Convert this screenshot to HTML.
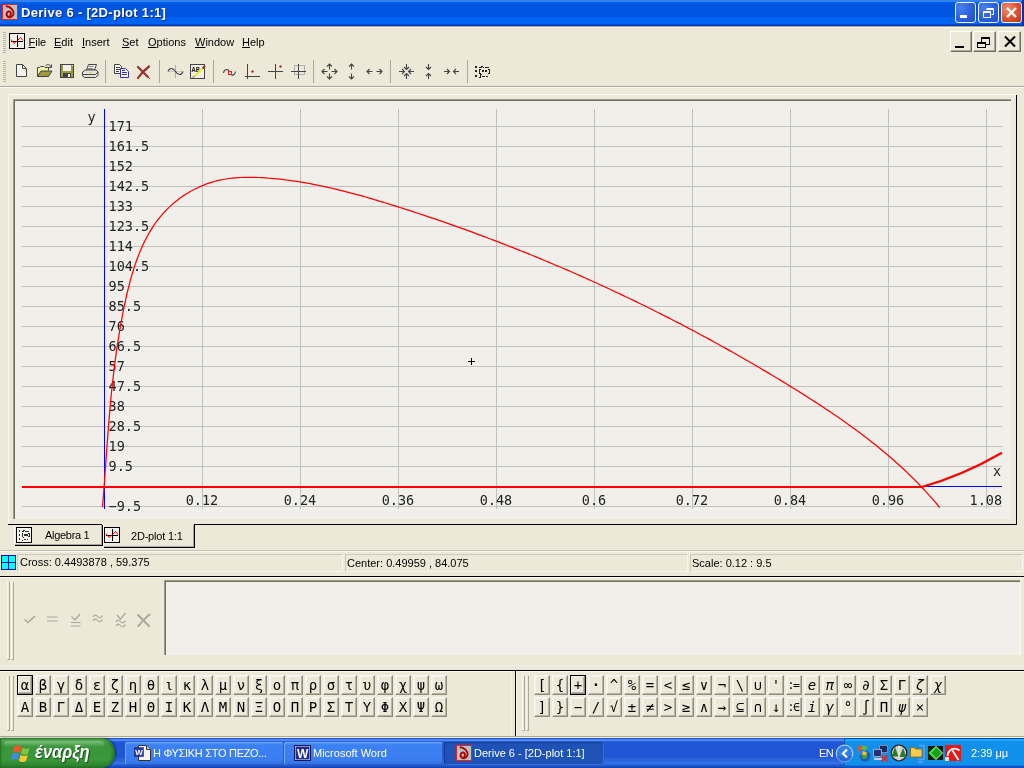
<!DOCTYPE html>
<html><head><meta charset="utf-8"><title>Derive 6 - [2D-plot 1:1]</title>
<style>
*{margin:0;padding:0;box-sizing:border-box}
html,body{width:1024px;height:768px;overflow:hidden;background:#ECE9D8}
#w{position:absolute;left:0;top:0;width:1024px;height:768px;will-change:transform}
body{position:relative;font-family:"Liberation Sans",sans-serif;font-size:11px;color:#000}
.a{position:absolute}
.t{position:absolute;white-space:pre;line-height:13px;height:13px}
.mono{font-family:"DejaVu Sans Mono","Liberation Mono",monospace;font-size:13.5px;line-height:15px;height:15px;position:absolute;white-space:pre;color:#222}
u{text-decoration:underline;text-underline-offset:1px}
#title{left:0;top:0;width:1024px;height:26px;background:linear-gradient(to bottom,#3580E8 0,#3580E8 2px,#0061F0 2px,#0061F0 4px,#0054E0 4.5px,#0054E0 16.5px,#0062F0 17px,#0062F0 23.5px,#0048CC 24.5px,#0038B0 26px)}
#title .tt{left:21px;top:5px;color:#fff;font-weight:bold;font-size:13px;line-height:16px;height:16px;text-shadow:1px 1px 0 #0A2B8C;letter-spacing:.3px}
  .cb{position:absolute;top:2px;width:21px;height:21px;border:1px solid #F0F0F0;border-radius:3px;background:radial-gradient(circle at 25% 25%,#4A80EE 0,#2C60DC 55%,#2050C8 100%)}
.cb.x{background:radial-gradient(circle at 30% 30%,#F09070 0,#DB5130 55%,#B8351A 100%)}
.mb{position:absolute;top:31px;width:22px;height:21px;background:#ECE9D8;border:1px solid;border-color:#fff #716F64 #716F64 #fff;box-shadow:inset -1px -1px 0 #ACA899}
.gb{position:absolute;width:16px;height:20px;border:1px solid;border-color:#F6F5F0 #8E8B7E #8E8B7E #F6F5F0;background:#ECE9D8;box-shadow:inset -1px -1px 0 #B8B5A5,inset 1px 1px 0 #F4F3EE}
.gb span{position:absolute;left:-4px;right:-4px;top:0;height:18px;line-height:18px;text-align:center;font-family:"DejaVu Sans Mono","Liberation Mono",monospace;font-size:14px;color:#000}
</style></head>
<body>
<div id="w">
<div id="title" class="a">
<svg class="a" style="left:2px;top:4px" width="16" height="16" viewBox="0 0 16 16"><rect x="0.5" y="0.5" width="15" height="15" fill="#C0C0C0" stroke="#E8201C" shape-rendering="crispEdges"/><path d="M4.5 2.300C8.5 3 12 6 11.5 10 11.200 13 7 14.200 5.200 12 3.800 10 5 7.200 7.300 7.400 9 7.600 9.5 10 8.300 11.5" fill="none" stroke="#B00808" stroke-width="2" stroke-linecap="round"/></svg>
<div class="t tt">Derive 6 - [2D-plot 1:1]</div>
<div class="a" style="left:1022px;top:0;width:2px;height:26px;background:#0A2FA0"></div>
<div class="cb" style="left:955px"><div class="a" style="left:4px;top:12px;width:7px;height:3px;background:#fff"></div></div>
<div class="cb" style="left:978px"><svg class="a" style="left:3px;top:3px" width="13" height="13" viewBox="0 0 13 13"><path d="M4.5 2.5h7v6h-2 M4.5 3.5h7" fill="none" stroke="#fff" stroke-width="1"/><path d="M1.5 5.5h7v6h-7z M1.5 6.5h7" fill="none" stroke="#fff" stroke-width="1"/></svg></div>
<div class="cb x" style="left:1001px"><svg class="a" style="left:3px;top:3px" width="13" height="13" viewBox="0 0 13 13"><path d="M2 2l9 9M11 2l-9 9" stroke="#fff" stroke-width="2.2" stroke-linecap="butt"/></svg></div>
</div>
<div class="a" style="left:0;top:26px;width:1024px;height:1px;background:#A9A592"></div>
<div class="a" style="left:0;top:27px;width:1024px;height:1px;background:#F6F4EC"></div>
<div class="a" style="left:3px;top:32px;width:3px;height:21px;background:repeating-linear-gradient(to bottom,#B8B4A2 0,#B8B4A2 1px,transparent 1px,transparent 2px)"></div>
<svg class="a" style="left:9px;top:33px" width="16" height="16" viewBox="0 0 16 16"><g shape-rendering="crispEdges"><rect x="0.5" y="0.5" width="15" height="15" fill="#F2F1EC" stroke="#000"/><rect x="8" y="2" width="1" height="12" fill="#000"/><rect x="2" y="8" width="12" height="1" fill="#000"/></g><path d="M2 6.5l3 4 3.5-3 3-3 2.5 3" fill="none" stroke="#F00000" stroke-width="1"/></svg>
<div class="t" style="left:28.5px;top:36px"><u>F</u>ile</div>
<div class="t" style="left:54px;top:36px"><u>E</u>dit</div>
<div class="t" style="left:82px;top:36px"><u>I</u>nsert</div>
<div class="t" style="left:122px;top:36px"><u>S</u>et</div>
<div class="t" style="left:148px;top:36px"><u>O</u>ptions</div>
<div class="t" style="left:195px;top:36px"><u>W</u>indow</div>
<div class="t" style="left:242px;top:36px"><u>H</u>elp</div>
<div class="mb" style="left:950px"><div class="a" style="left:4px;top:14px;width:9px;height:2px;background:#000"></div></div>
<div class="mb" style="left:973px;width:23px"><svg class="a" style="left:0;top:0" width="21" height="19" viewBox="974 32 21 19" shape-rendering="crispEdges"><rect x="981" y="37" width="9" height="2"/><rect x="981" y="37" width="1" height="5"/><rect x="989" y="37" width="1" height="8"/><rect x="986" y="44" width="4" height="1"/><rect x="977" y="42" width="9" height="2"/><rect x="977" y="42" width="1" height="6"/><rect x="985" y="42" width="1" height="6"/><rect x="977" y="47" width="9" height="1"/></svg></div>
<div class="mb" style="left:998px;width:23px"><svg class="a" style="left:4px;top:3px" width="14" height="13" viewBox="0 0 14 13"><path d="M2 1.5l10 10M12 1.5l-10 10" stroke="#000" stroke-width="2"/></svg></div>
<div class="a" style="left:3px;top:61px;width:3px;height:22px;background:repeating-linear-gradient(to bottom,#B8B4A2 0,#B8B4A2 1px,transparent 1px,transparent 2px)"></div>
<svg class="a" style="left:0;top:56px" width="512" height="32" viewBox="0 56 512 32"><g shape-rendering="crispEdges"><rect x="105" y="60" width="1" height="23" fill="#ACA899"/><rect x="159" y="60" width="1" height="23" fill="#ACA899"/><rect x="213" y="60" width="1" height="23" fill="#ACA899"/><rect x="313" y="60" width="1" height="23" fill="#ACA899"/><rect x="390" y="60" width="1" height="23" fill="#ACA899"/><rect x="467" y="60" width="1" height="23" fill="#ACA899"/></g><path d="M16.5 64.5h6l4 4v8h-10z" fill="#F4F3EE" stroke="#444" stroke-width="1"/><path d="M22.5 64.5v4h4" fill="none" stroke="#444"/><path d="M37.5 76.5v-9h2l1-1h3.5l1 1h3.5v3" fill="#F4F2A8" stroke="#444"/><path d="M37.5 76.5l3.5-5.5h11l-3.5 5.5z" fill="#9C9A3C" stroke="#444"/><path d="M45.5 66c1.5-2 4.5-2 5.5 1M51.5 64.5v3h-3" fill="none" stroke="#444"/><rect x="60.5" y="64.5" width="13" height="13" fill="#9C9A3C" stroke="#444"/><rect x="63" y="65" width="8" height="6" fill="#F0EFEA"/><rect x="72" y="65" width="1" height="1" fill="#F0EFEA"/><rect x="63" y="73" width="8" height="4" fill="#444"/><rect x="68" y="74" width="2" height="3" fill="#F0EFEA"/><path d="M86.5 70l2-5.5h8l-2 5.5z" fill="#F4F3EE" stroke="#444"/><path d="M82.5 72l3-2h10.5l2 2v3.5l-2.5 2h-11l-2-1.5z" fill="#E4E2D8" stroke="#444"/><path d="M83 74.5h12.5l2.5-2.5" fill="none" stroke="#444"/><rect x="89" y="72" width="3" height="1" fill="#E8E000"/><path d="M88.5 66.5h5M88 68.5h5" stroke="#888" stroke-width="1"/><path d="M114.5 64.5h5l2 2v7h-7z" fill="#F4F3EE" stroke="#444"/><path d="M116 67.5h4M116 69.5h4M116 71.5h3" stroke="#444"/><path d="M120.5 68.5h5l3 3v6h-8z" fill="#F4F3EE" stroke="#3434A8"/><path d="M122 72.5h5M122 74.5h5M122 70.5h3" stroke="#3434A8"/><path d="M138 67l10 10M149 66.5c-4 3-8 7-11 11.5" fill="none" stroke="#9C3030" stroke-width="2.2" stroke-linecap="round"/><rect x="149" y="78" width="1" height="1" fill="#9C3030"/><rect x="175" y="65" width="1" height="13" fill="#B0B0B0" shape-rendering="crispEdges"/><rect x="168" y="71" width="15" height="1" fill="#C8C8C8" shape-rendering="crispEdges"/><path d="M168 71.5c1.5-4 5-4 7.5 0s6 4 7.5 0" fill="none" stroke="#444" stroke-width="1.1"/><rect x="190.5" y="64.5" width="14" height="14" fill="#F0EFEA" stroke="#444"/><text x="191.5" y="71.5" font-family="Liberation Mono,monospace" font-size="7" font-weight="bold" fill="#222">AB</text><path d="M194.5 76.5l8.5-8.5" stroke="#F0F020" stroke-width="2.200"/><path d="M202.5 68.5l2.5-2.5" stroke="#9C3030" stroke-width="2.200"/><path d="M192.5 77.5l2-0.5-1-1z" fill="#888" stroke="#888" stroke-width=".6"/><path d="M223.5 73c0.5-4 5-5 6 -0.5" fill="none" stroke="#444" stroke-width="1.100"/><path d="M231 74.5c2 1.5 4 0 4.5-3" fill="none" stroke="#444" stroke-width="1.100"/><rect x="228.5" y="71.5" width="3" height="3" fill="#FFC8C8" stroke="#F02020" stroke-width="1"/><g shape-rendering="crispEdges"><rect x="247" y="64" width="1" height="15" fill="#444"/><rect x="245" y="76" width="15" height="1" fill="#444"/></g><path d="M252.5 70l1.5 1.5-1.5 1.5-1.5-1.5z" fill="#9C3030"/><g shape-rendering="crispEdges"><rect x="275" y="64" width="1" height="15" fill="#444"/><rect x="268" y="71" width="15" height="1" fill="#444"/></g><path d="M280.5 65l1.5 1.5-1.5 1.5-1.5-1.5z" fill="#9C3030"/><g shape-rendering="crispEdges"><rect x="294.5" y="65.5" width="10" height="9" fill="none" stroke="#B0B0B0"/><rect x="298" y="64" width="1" height="15" fill="#444"/><rect x="291" y="71" width="15" height="1" fill="#444"/></g><path d="M331.5 71.5L337.0 71.5M334.5 74.0L337.0 71.5L334.5 69.0" fill="none" stroke="#444" stroke-width="1.100"/><path d="M327.5 71.5L322.0 71.5M324.5 69.0L322.0 71.5L324.5 74.0" fill="none" stroke="#444" stroke-width="1.100"/><path d="M329.5 73.5L329.5 79.0M327.0 76.5L329.5 79.0L332.0 76.5" fill="none" stroke="#444" stroke-width="1.100"/><path d="M329.5 69.5L329.5 64.0M332.0 66.5L329.5 64.0L327.0 66.5" fill="none" stroke="#444" stroke-width="1.100"/><path d="M351.5 73.5L351.5 79.0M349.0 76.5L351.5 79.0L354.0 76.5" fill="none" stroke="#444" stroke-width="1.100"/><path d="M351.5 69.5L351.5 64.0M354.0 66.5L351.5 64.0L349.0 66.5" fill="none" stroke="#444" stroke-width="1.100"/><path d="M376.5 71.5L382.0 71.5M379.5 74.0L382.0 71.5L379.5 69.0" fill="none" stroke="#444" stroke-width="1.100"/><path d="M372.5 71.5L367.0 71.5M369.5 69.0L367.0 71.5L369.5 74.0" fill="none" stroke="#444" stroke-width="1.100"/><path d="M414.0 71.5L408.5 71.5M411.0 69.0L408.5 71.5L411.0 74.0" fill="none" stroke="#444" stroke-width="1.100"/><path d="M399.0 71.5L404.5 71.5M402.0 74.0L404.5 71.5L402.0 69.0" fill="none" stroke="#444" stroke-width="1.100"/><path d="M406.5 79.0L406.5 73.5M409.0 76.0L406.5 73.5L404.0 76.0" fill="none" stroke="#444" stroke-width="1.100"/><path d="M406.5 64.0L406.5 69.5M404.0 67.0L406.5 69.5L409.0 67.0" fill="none" stroke="#444" stroke-width="1.100"/><path d="M428.5 79.0L428.5 73.5M431.0 76.0L428.5 73.5L426.0 76.0" fill="none" stroke="#444" stroke-width="1.100"/><path d="M428.5 64.0L428.5 69.5M426.0 67.0L428.5 69.5L431.0 67.0" fill="none" stroke="#444" stroke-width="1.100"/><path d="M459.0 71.5L453.5 71.5M456.0 69.0L453.5 71.5L456.0 74.0" fill="none" stroke="#444" stroke-width="1.100"/><path d="M444.0 71.5L449.5 71.5M447.0 74.0L449.5 71.5L447.0 69.0" fill="none" stroke="#444" stroke-width="1.100"/><g shape-rendering="crispEdges" fill="#222"><rect x="475" y="66" width="2" height="2"/><rect x="475" y="70" width="2" height="2"/><rect x="475" y="75" width="2" height="2"/><rect x="479" y="67" width="3" height="1"/><rect x="483" y="67" width="1" height="1"/><rect x="485" y="67" width="4" height="1"/><rect x="481" y="66" width="2" height="1"/><rect x="479" y="69" width="1" height="5"/><rect x="479" y="69" width="2" height="1"/><rect x="479" y="73" width="2" height="1"/><rect x="482" y="70" width="2" height="2"/><rect x="485" y="70" width="2" height="2"/><rect x="489" y="69" width="1" height="5"/><rect x="488" y="69" width="2" height="1"/><rect x="488" y="73" width="2" height="1"/><rect x="480" y="74" width="1" height="4"/><rect x="481" y="74" width="1" height="1"/><rect x="479" y="77" width="1" height="1"/><rect x="482" y="76" width="3" height="1"/><rect x="486" y="76" width="2" height="1"/></g></svg>
<div class="a" style="left:0;top:86px;width:1024px;height:1px;background:#ACA899"></div>
<div class="a" style="left:0;top:87px;width:1024px;height:1px;background:#FBFAF5"></div>
<div class="a" style="left:8px;top:94px;width:1008px;height:1px;background:#F8F7F2"></div>
<div class="a" style="left:8px;top:94px;width:1px;height:431px;background:#F8F7F2"></div>
<div class="a" style="left:1016px;top:95px;width:1px;height:430px;background:#000"></div>
<div class="a" style="left:194px;top:524px;width:823px;height:1px;background:#000"></div>
<div class="a" style="left:8px;top:524px;width:94px;height:1px;background:#000"></div>
<div class="a" style="left:13px;top:99px;width:998px;height:420px;background:#9D9A8C"></div>
<div class="a" style="left:14px;top:100px;width:997px;height:419px;background:#716F64"></div>
<div class="a" style="left:15px;top:101px;width:996px;height:418px;background:#F0EFEA"></div>
<svg class="a" style="left:0;top:0" width="1024" height="768" viewBox="0 0 1024 768" shape-rendering="crispEdges"><rect x="22" y="126" width="980" height="1" fill="#C0C0C0"/><rect x="22" y="146" width="980" height="1" fill="#C0C0C0"/><rect x="22" y="166" width="980" height="1" fill="#C0C0C0"/><rect x="22" y="186" width="980" height="1" fill="#C0C0C0"/><rect x="22" y="206" width="980" height="1" fill="#C0C0C0"/><rect x="22" y="226" width="980" height="1" fill="#C0C0C0"/><rect x="22" y="246" width="980" height="1" fill="#C0C0C0"/><rect x="22" y="266" width="980" height="1" fill="#C0C0C0"/><rect x="22" y="286" width="980" height="1" fill="#C0C0C0"/><rect x="22" y="306" width="980" height="1" fill="#C0C0C0"/><rect x="22" y="326" width="980" height="1" fill="#C0C0C0"/><rect x="22" y="346" width="980" height="1" fill="#C0C0C0"/><rect x="22" y="366" width="980" height="1" fill="#C0C0C0"/><rect x="22" y="386" width="980" height="1" fill="#C0C0C0"/><rect x="22" y="406" width="980" height="1" fill="#C0C0C0"/><rect x="22" y="426" width="980" height="1" fill="#C0C0C0"/><rect x="22" y="446" width="980" height="1" fill="#C0C0C0"/><rect x="22" y="466" width="980" height="1" fill="#C0C0C0"/><rect x="22" y="486" width="980" height="1" fill="#C0C0C0"/><rect x="22" y="506" width="980" height="1" fill="#C0C0C0"/><rect x="202" y="109" width="1" height="400" fill="#C0C0C0"/><rect x="300" y="109" width="1" height="400" fill="#C0C0C0"/><rect x="398" y="109" width="1" height="400" fill="#C0C0C0"/><rect x="496" y="109" width="1" height="400" fill="#C0C0C0"/><rect x="594" y="109" width="1" height="400" fill="#C0C0C0"/><rect x="692" y="109" width="1" height="400" fill="#C0C0C0"/><rect x="790" y="109" width="1" height="400" fill="#C0C0C0"/><rect x="888" y="109" width="1" height="400" fill="#C0C0C0"/><rect x="986" y="109" width="1" height="400" fill="#C0C0C0"/><rect x="104" y="109" width="1" height="400" fill="#0000FF"/><rect x="22" y="486" width="980" height="1" fill="#0000FF"/></svg>
<div class="mono" style="left:108.6px;top:118.5px">171</div>
<div class="mono" style="left:108.6px;top:138.5px">161.5</div>
<div class="mono" style="left:108.6px;top:158.5px">152</div>
<div class="mono" style="left:108.6px;top:178.5px">142.5</div>
<div class="mono" style="left:108.6px;top:198.5px">133</div>
<div class="mono" style="left:108.6px;top:218.5px">123.5</div>
<div class="mono" style="left:108.6px;top:238.5px">114</div>
<div class="mono" style="left:108.6px;top:258.5px">104.5</div>
<div class="mono" style="left:108.6px;top:278.5px">95</div>
<div class="mono" style="left:108.6px;top:298.5px">85.5</div>
<div class="mono" style="left:108.6px;top:318.5px">76</div>
<div class="mono" style="left:108.6px;top:338.5px">66.5</div>
<div class="mono" style="left:108.6px;top:358.5px">57</div>
<div class="mono" style="left:108.6px;top:378.5px">47.5</div>
<div class="mono" style="left:108.6px;top:398.5px">38</div>
<div class="mono" style="left:108.6px;top:418.5px">28.5</div>
<div class="mono" style="left:108.6px;top:438.5px">19</div>
<div class="mono" style="left:108.6px;top:458.5px">9.5</div>
<div class="mono" style="left:108.6px;top:498.5px">−9.5</div>
<div class="mono" style="left:185.7px;top:493px">0.12</div>
<div class="mono" style="left:283.7px;top:493px">0.24</div>
<div class="mono" style="left:381.7px;top:493px">0.36</div>
<div class="mono" style="left:479.7px;top:493px">0.48</div>
<div class="mono" style="left:581.8px;top:493px">0.6</div>
<div class="mono" style="left:675.7px;top:493px">0.72</div>
<div class="mono" style="left:773.7px;top:493px">0.84</div>
<div class="mono" style="left:871.7px;top:493px">0.96</div>
<div class="mono" style="left:969.5px;top:493px">1.08</div>
<div class="mono" style="left:87.5px;top:110px">y</div>
<div class="mono" style="left:993px;top:463.5px">x</div>
<svg class="a" style="left:0;top:0" width="1024" height="768" viewBox="0 0 1024 768"><rect x="22" y="486" width="901" height="2" fill="#FF0000" shape-rendering="crispEdges"/><path d="M102.5 507.3 102.7 504.2 103.0 501.2 103.2 498.1 103.5 495.1 103.7 492.0 103.9 489.0 104.1 485.9 104.4 482.9 104.6 479.9 104.8 476.9 105.0 473.8 105.2 470.8 105.4 467.8 105.7 464.8 105.9 461.8 106.1 458.8 106.3 455.8 106.5 452.8 106.7 449.8 107.0 446.8 107.2 443.9 107.4 440.9 107.6 437.9 107.8 434.9 108.1 432.0 108.3 429.0 108.5 426.0 108.8 423.1 109.0 420.1 109.3 417.1 109.5 414.2 109.8 411.2 110.0 408.3 110.3 405.3 110.6 402.4 110.8 399.4 111.1 396.5 111.4 393.5 111.7 390.5 112.0 387.6 112.3 384.6 112.7 381.7 113.0 378.7 113.3 375.8 113.7 372.8 114.0 369.9 114.4 366.9 114.7 364.0 115.1 361.0 115.5 358.1 115.9 355.1 116.3 352.2 116.8 349.2 117.2 346.2 117.6 343.3 118.1 340.3 118.6 337.3 119.1 334.4 119.5 331.4 120.1 328.4 120.6 325.4 121.1 322.5 121.7 319.5 122.2 316.5 122.8 313.5 123.4 310.5 124.0 307.5 124.6 304.5 125.3 301.5 125.9 298.5 126.6 295.5 127.3 292.5 128.0 289.5 128.8 286.5 129.5 283.5 130.3 280.5 131.1 277.6 132.0 274.6 132.9 271.7 133.8 268.8 134.7 265.9 135.7 263.0 136.7 260.1 137.8 257.3 138.9 254.4 140.0 251.6 141.2 248.9 142.4 246.1 143.6 243.4 144.9 240.7 146.3 238.1 147.7 235.5 149.2 232.9 150.7 230.4 152.2 227.9 153.8 225.4 155.5 223.0 157.2 220.7 159.0 218.4 160.8 216.1 162.7 213.9 164.7 211.7 166.7 209.6 168.8 207.6 170.9 205.6 173.1 203.6 175.4 201.7 177.7 199.9 180.0 198.1 182.4 196.4 184.9 194.8 187.4 193.2 189.9 191.7 192.5 190.3 195.1 189.0 197.8 187.7 200.5 186.4 203.2 185.3 205.9 184.2 208.7 183.2 211.5 182.3 214.4 181.5 217.2 180.7 220.1 180.1 223.0 179.5 226.0 179.0 228.9 178.5 231.9 178.2 234.9 177.9 237.9 177.6 240.9 177.5 243.9 177.3 246.9 177.3 250.0 177.3 253.0 177.3 256.0 177.4 259.1 177.5 262.1 177.6 265.2 177.8 268.2 178.1 271.3 178.3 274.3 178.6 277.3 178.9 280.3 179.2 283.4 179.6 286.4 180.0 289.4 180.4 292.4 180.8 295.3 181.2 298.3 181.7 301.3 182.2 304.3 182.7 307.2 183.2 310.2 183.7 313.2 184.3 316.1 184.9 319.1 185.5 322.0 186.1 324.9 186.7 327.9 187.4 330.8 188.0 333.7 188.7 336.6 189.4 339.6 190.1 342.5 190.8 345.4 191.6 348.3 192.3 351.2 193.1 354.1 193.8 357.0 194.6 359.9 195.4 362.7 196.2 365.6 197.0 368.5 197.9 371.4 198.7 374.3 199.6 377.1 200.4 380.0 201.3 382.9 202.1 385.7 203.0 388.6 203.9 391.5 204.8 394.3 205.7 397.2 206.6 400.0 207.5 402.9 208.4 405.7 209.3 408.6 210.2 411.4 211.2 414.3 212.1 417.1 213.0 420.0 214.0 422.8 214.9 425.7 215.9 428.5 216.8 431.4 217.8 434.2 218.7 437.0 219.7 439.9 220.7 442.7 221.7 445.5 222.6 448.4 223.6 451.2 224.6 454.0 225.6 456.8 226.6 459.7 227.6 462.5 228.6 465.3 229.7 468.1 230.7 470.9 231.7 473.7 232.7 476.6 233.8 479.4 234.8 482.2 235.9 485.0 236.9 487.8 238.0 490.6 239.0 493.4 240.1 496.2 241.2 499.0 242.2 501.8 243.3 504.6 244.4 507.4 245.5 510.2 246.6 513.0 247.7 515.8 248.8 518.5 249.9 521.3 251.0 524.1 252.1 526.9 253.2 529.7 254.3 532.4 255.5 535.2 256.6 538.0 257.7 540.8 258.9 543.5 260.0 546.3 261.2 549.1 262.4 551.8 263.5 554.6 264.7 557.3 265.9 560.1 267.0 562.9 268.2 565.6 269.4 568.4 270.6 571.1 271.8 573.9 273.0 576.6 274.2 579.3 275.4 582.1 276.6 584.8 277.8 587.6 279.1 590.3 280.3 593.0 281.5 595.8 282.8 598.5 284.0 601.2 285.2 603.9 286.5 606.7 287.8 609.4 289.0 612.1 290.3 614.8 291.6 617.5 292.8 620.3 294.1 623.0 295.4 625.7 296.7 628.4 298.0 631.1 299.3 633.8 300.6 636.5 301.9 639.2 303.2 641.9 304.5 644.6 305.8 647.3 307.2 650.0 308.5 652.6 309.8 655.3 311.2 658.0 312.5 660.7 313.9 663.4 315.2 666.0 316.6 668.7 317.9 671.4 319.3 674.1 320.7 676.7 322.1 679.4 323.4 682.1 324.8 684.7 326.2 687.4 327.6 690.0 329.0 692.7 330.4 695.3 331.8 698.0 333.2 700.6 334.7 703.3 336.1 705.9 337.5 708.6 338.9 711.2 340.4 713.8 341.8 716.5 343.3 719.1 344.7 721.7 346.2 724.3 347.6 727.0 349.1 729.6 350.6 732.2 352.0 734.8 353.5 737.4 355.0 740.0 356.5 742.6 358.0 745.3 359.5 747.9 361.0 750.5 362.5 753.1 364.0 755.7 365.5 758.2 367.0 760.8 368.5 763.4 370.1 766.0 371.6 768.6 373.1 771.2 374.7 773.8 376.2 776.3 377.8 778.9 379.3 781.5 380.9 784.0 382.4 786.6 384.0 789.2 385.6 791.7 387.2 794.3 388.8 796.8 390.3 799.4 391.9 801.9 393.5 804.5 395.1 807.0 396.7 809.6 398.4 812.1 400.0 814.6 401.6 817.2 403.2 819.7 404.9 822.2 406.5 824.7 408.2 827.2 409.9 829.7 411.5 832.2 413.2 834.7 414.9 837.1 416.6 839.6 418.3 842.1 420.0 844.5 421.7 847.0 423.5 849.4 425.2 851.8 427.0 854.3 428.7 856.7 430.5 859.1 432.3 861.5 434.1 863.9 435.9 866.3 437.7 868.6 439.5 871.0 441.4 873.3 443.2 875.7 445.1 878.0 447.0 880.3 448.9 882.6 450.8 884.9 452.7 887.2 454.6 889.5 456.5 891.7 458.5 894.0 460.5 896.2 462.5 898.5 464.5 900.7 466.5 902.9 468.5 905.0 470.5 907.2 472.6 909.4 474.7 911.5 476.8 913.7 478.9 915.8 481.0 917.9 483.1 920.0 485.3 922.0 487.5 924.1 489.7 926.1 491.9 928.1 494.1 930.1 496.4 932.1 498.6 934.1 500.9 936.1 503.2 938.0 505.5 939.7 507.6" fill="none" stroke="#FF0000" stroke-width="1.25" stroke-linejoin="round"/><path d="M921 487.2 Q962 475.8 1002 452.7" fill="none" stroke="#FF0000" stroke-width="2.2"/><path d="M468 361.5h7M471.5 358v7" stroke="#000" stroke-width="1" shape-rendering="crispEdges"/></svg>
<div class="a" style="left:14px;top:525px;width:1px;height:20px;background:#F8F7F2"></div>
<div class="a" style="left:15px;top:545px;width:88px;height:1px;background:#000"></div>
<div class="a" style="left:15px;top:544px;width:87px;height:1px;background:#ACA899"></div>
<div class="a" style="left:102px;top:525px;width:1px;height:21px;background:#000"></div>
<div class="a" style="left:101px;top:525px;width:1px;height:20px;background:#ACA899"></div>
<svg class="a" style="left:16px;top:527px" width="16" height="16" viewBox="0 0 16 16"><rect x="0.5" y="0.5" width="15" height="15" fill="#F4F3EE" stroke="#000" shape-rendering="crispEdges"/><g transform="translate(3,3) scale(0.73,0.92)"><g shape-rendering="crispEdges" fill="#333"><rect x="0" y="0" width="2" height="2"/><rect x="0" y="4" width="2" height="2"/><rect x="0" y="9" width="2" height="2"/><rect x="4" y="1" width="3" height="1"/><rect x="8" y="1" width="1" height="1"/><rect x="10" y="1" width="4" height="1"/><rect x="6" y="0" width="2" height="1"/><rect x="4" y="3" width="1" height="5"/><rect x="4" y="3" width="2" height="1"/><rect x="4" y="7" width="2" height="1"/><rect x="7" y="4" width="2" height="2"/><rect x="10" y="4" width="2" height="2"/><rect x="14" y="3" width="1" height="5"/><rect x="13" y="3" width="2" height="1"/><rect x="13" y="7" width="2" height="1"/><rect x="5" y="8" width="1" height="4"/><rect x="6" y="8" width="1" height="1"/><rect x="4" y="11" width="1" height="1"/><rect x="7" y="10" width="3" height="1"/><rect x="11" y="10" width="2" height="1"/></g></g></svg>
<div class="t" style="left:45px;top:528.5px;letter-spacing:-.3px">Algebra 1</div>
<div class="a" style="left:103px;top:524px;width:1px;height:23px;background:#F8F7F2"></div>
<div class="a" style="left:104px;top:547px;width:91px;height:1px;background:#000"></div>
<div class="a" style="left:104px;top:546px;width:90px;height:1px;background:#ACA899"></div>
<div class="a" style="left:194px;top:524px;width:1px;height:24px;background:#000"></div>
<div class="a" style="left:193px;top:525px;width:1px;height:22px;background:#ACA899"></div>
<svg class="a" style="left:104px;top:527px" width="16" height="16" viewBox="0 0 16 16"><g shape-rendering="crispEdges"><rect x="0.5" y="0.5" width="15" height="15" fill="#F2F1EC" stroke="#000"/><rect x="8" y="2" width="1" height="12" fill="#000"/><rect x="2" y="8" width="12" height="1" fill="#000"/></g><path d="M2 6.5l3 4 3.5-3 3-3 2.5 3" fill="none" stroke="#F00000" stroke-width="1"/></svg>
<div class="t" style="left:131px;top:530px;letter-spacing:-.2px">2D-plot 1:1</div>
<div class="a" style="left:0;top:550px;width:1024px;height:1px;background:#C5C2B2"></div>
<div class="a" style="left:0;top:551px;width:1024px;height:1px;background:#F6F5EE"></div>
<svg class="a" style="left:1px;top:555px" width="15" height="15" viewBox="0 0 15 15" shape-rendering="crispEdges"><rect x="0.5" y="0.5" width="14" height="14" fill="#00FFFF" stroke="#1010A0"/><rect x="7" y="1" width="1" height="13" fill="#1010A0"/><rect x="1" y="7" width="13" height="1" fill="#1010A0"/></svg>
<div class="a" style="left:17px;top:554px;width:326px;height:18px;border:1px solid;border-color:#CDCABB #F5F4EE #F5F4EE #CDCABB"></div>
<div class="a" style="left:345px;top:554px;width:343px;height:18px;border:1px solid;border-color:#CDCABB #F5F4EE #F5F4EE #CDCABB"></div>
<div class="a" style="left:690px;top:554px;width:333px;height:18px;border:1px solid;border-color:#CDCABB #F5F4EE #F5F4EE #CDCABB"></div>
<div class="t" style="left:20px;top:556px">Cross: 0.4493878 , 59.375</div>
<div class="t" style="left:347px;top:557px">Center: 0.49959 , 84.075</div>
<div class="t" style="left:692px;top:557px">Scale: 0.12 : 9.5</div>
<div class="a" style="left:0;top:576px;width:1024px;height:1px;background:#000"></div>
<div class="a" style="left:0;top:577px;width:1024px;height:1px;background:#FBF8E8"></div>
<div class="a" style="left:7px;top:582px;width:3px;height:78px;border-left:1px solid #F8F7F2;border-right:1px solid #ACA899;border-bottom:1px solid #ACA899"></div>
<div class="a" style="left:11px;top:582px;width:3px;height:78px;border-left:1px solid #F8F7F2;border-right:1px solid #ACA899;border-bottom:1px solid #ACA899"></div>
<svg class="a" style="left:0;top:608px" width="160" height="24" viewBox="0 608 160 24" fill="none" stroke="#ACA899" stroke-width="1.200"><path d="M24.5 619.5l3.5 3 7-6.5" stroke-width="1.5"/><path d="M47 617h10.5M47 621h10.5"/><path d="M71.5 616.5l3.5 3.5 5-6M71 622.5h9.5M71 626h9.5"/><path d="M93 617c1.5-2.5 3-2.5 4.5-0.5s3.5 1.5 5-1M93 621c1.5-2.5 3-2.5 4.5-0.5s3.5 1.5 5-1"/><path d="M117 615l3.5 4 5-6M116 622c1.5-2.5 3-2.5 4.5-0.5s3.5 1.5 5-1M116 626c1.5-2.5 3-2.5 4.5-0.5s3.5 1.5 5-1"/><path d="M138 615l11 11M149.5 614.5c-4 3-8 7-11 11.5" stroke-width="2" stroke-linecap="round"/></svg>
<div class="a" style="left:164px;top:580px;width:857px;height:75px;background:#FBFAF6"></div>
<div class="a" style="left:164px;top:580px;width:856px;height:75px;background:#9D9A8C"></div>
<div class="a" style="left:165px;top:581px;width:855px;height:74px;background:#716F64"></div>
<div class="a" style="left:166px;top:582px;width:854px;height:73px;background:#F0EFEA"></div>
<div class="a" style="left:0;top:665px;width:1024px;height:1px;background:#F3F2EC"></div>
<div class="a" style="left:0;top:670px;width:1024px;height:1px;background:#000"></div>
<div class="a" style="left:0;top:671px;width:1024px;height:1px;background:#FBF8E8"></div>
<div class="a" style="left:7px;top:676px;width:3px;height:55px;border-left:1px solid #F8F7F2;border-right:1px solid #ACA899;border-bottom:1px solid #ACA899"></div>
<div class="a" style="left:11px;top:676px;width:3px;height:55px;border-left:1px solid #F8F7F2;border-right:1px solid #ACA899;border-bottom:1px solid #ACA899"></div>
<div class="a" style="left:522px;top:676px;width:3px;height:55px;border-left:1px solid #F8F7F2;border-right:1px solid #ACA899;border-bottom:1px solid #ACA899"></div>
<div class="a" style="left:526px;top:676px;width:3px;height:55px;border-left:1px solid #F8F7F2;border-right:1px solid #ACA899;border-bottom:1px solid #ACA899"></div>
<div class="a" style="left:515px;top:671px;width:1px;height:66px;background:#000"></div>
<div class="a" style="left:516px;top:671px;width:1px;height:66px;background:#FBF8E8"></div>
<div class="a" style="left:511px;top:672px;width:1px;height:65px;background:#F3F2EA"></div>
<div class="gb" style="left:17px;top:675px;border-color:#000;box-shadow:inset -1px -1px 0 #8E8B7E,inset 1px 1px 0 #F6F5F0,inset -2px -2px 0 #B8B5A5"><span>α</span></div>
<div class="gb" style="left:17px;top:697px"><span>Α</span></div>
<div class="gb" style="left:35px;top:675px"><span>β</span></div>
<div class="gb" style="left:35px;top:697px"><span>Β</span></div>
<div class="gb" style="left:53px;top:675px"><span>γ</span></div>
<div class="gb" style="left:53px;top:697px"><span>Γ</span></div>
<div class="gb" style="left:71px;top:675px"><span>δ</span></div>
<div class="gb" style="left:71px;top:697px"><span>Δ</span></div>
<div class="gb" style="left:89px;top:675px"><span>ε</span></div>
<div class="gb" style="left:89px;top:697px"><span>Ε</span></div>
<div class="gb" style="left:107px;top:675px"><span>ζ</span></div>
<div class="gb" style="left:107px;top:697px"><span>Ζ</span></div>
<div class="gb" style="left:125px;top:675px"><span>η</span></div>
<div class="gb" style="left:125px;top:697px"><span>Η</span></div>
<div class="gb" style="left:143px;top:675px"><span>θ</span></div>
<div class="gb" style="left:143px;top:697px"><span>Θ</span></div>
<div class="gb" style="left:161px;top:675px"><span>ι</span></div>
<div class="gb" style="left:161px;top:697px"><span>Ι</span></div>
<div class="gb" style="left:179px;top:675px"><span>κ</span></div>
<div class="gb" style="left:179px;top:697px"><span>Κ</span></div>
<div class="gb" style="left:197px;top:675px"><span>λ</span></div>
<div class="gb" style="left:197px;top:697px"><span>Λ</span></div>
<div class="gb" style="left:215px;top:675px"><span>μ</span></div>
<div class="gb" style="left:215px;top:697px"><span>Μ</span></div>
<div class="gb" style="left:233px;top:675px"><span>ν</span></div>
<div class="gb" style="left:233px;top:697px"><span>Ν</span></div>
<div class="gb" style="left:251px;top:675px"><span>ξ</span></div>
<div class="gb" style="left:251px;top:697px"><span>Ξ</span></div>
<div class="gb" style="left:269px;top:675px"><span>ο</span></div>
<div class="gb" style="left:269px;top:697px"><span>Ο</span></div>
<div class="gb" style="left:287px;top:675px"><span>π</span></div>
<div class="gb" style="left:287px;top:697px"><span>Π</span></div>
<div class="gb" style="left:305px;top:675px"><span>ρ</span></div>
<div class="gb" style="left:305px;top:697px"><span>Ρ</span></div>
<div class="gb" style="left:323px;top:675px"><span>σ</span></div>
<div class="gb" style="left:323px;top:697px"><span>Σ</span></div>
<div class="gb" style="left:341px;top:675px"><span>τ</span></div>
<div class="gb" style="left:341px;top:697px"><span>Τ</span></div>
<div class="gb" style="left:359px;top:675px"><span>υ</span></div>
<div class="gb" style="left:359px;top:697px"><span>Υ</span></div>
<div class="gb" style="left:377px;top:675px"><span>φ</span></div>
<div class="gb" style="left:377px;top:697px"><span>Φ</span></div>
<div class="gb" style="left:395px;top:675px"><span>χ</span></div>
<div class="gb" style="left:395px;top:697px"><span>Χ</span></div>
<div class="gb" style="left:413px;top:675px"><span>ψ</span></div>
<div class="gb" style="left:413px;top:697px"><span>Ψ</span></div>
<div class="gb" style="left:431px;top:675px"><span>ω</span></div>
<div class="gb" style="left:431px;top:697px"><span>Ω</span></div>
<div class="gb" style="left:534px;top:675px"><span>[</span></div>
<div class="gb" style="left:552px;top:675px"><span>{</span></div>
<div class="gb" style="left:570px;top:675px;border-color:#000;box-shadow:inset -1px -1px 0 #8E8B7E,inset 1px 1px 0 #F6F5F0,inset -2px -2px 0 #B8B5A5"><span>+</span></div>
<div class="gb" style="left:588px;top:675px"><span style="font-weight:bold">·</span></div>
<div class="gb" style="left:606px;top:675px"><span>^</span></div>
<div class="gb" style="left:624px;top:675px"><span>%</span></div>
<div class="gb" style="left:642px;top:675px"><span>=</span></div>
<div class="gb" style="left:660px;top:675px"><span>&lt;</span></div>
<div class="gb" style="left:678px;top:675px"><span>≤</span></div>
<div class="gb" style="left:696px;top:675px"><span>∨</span></div>
<div class="gb" style="left:714px;top:675px"><span>¬</span></div>
<div class="gb" style="left:732px;top:675px"><span>\</span></div>
<div class="gb" style="left:750px;top:675px"><span>∪</span></div>
<div class="gb" style="left:768px;top:675px"><span>'</span></div>
<div class="gb" style="left:786px;top:675px"><span style="letter-spacing:-1.5px;font-size:11.5px;left:-6px">:=</span></div>
<div class="gb" style="left:804px;top:675px"><span><i>e</i></span></div>
<div class="gb" style="left:822px;top:675px"><span><i>π</i></span></div>
<div class="gb" style="left:840px;top:675px"><span>∞</span></div>
<div class="gb" style="left:858px;top:675px"><span>∂</span></div>
<div class="gb" style="left:876px;top:675px"><span>Σ</span></div>
<div class="gb" style="left:894px;top:675px"><span>Γ</span></div>
<div class="gb" style="left:912px;top:675px"><span><i>ζ</i></span></div>
<div class="gb" style="left:930px;top:675px"><span><i>χ</i></span></div>
<div class="gb" style="left:534px;top:697px"><span>]</span></div>
<div class="gb" style="left:552px;top:697px"><span>}</span></div>
<div class="gb" style="left:570px;top:697px"><span>−</span></div>
<div class="gb" style="left:588px;top:697px"><span>/</span></div>
<div class="gb" style="left:606px;top:697px"><span>√</span></div>
<div class="gb" style="left:624px;top:697px"><span>±</span></div>
<div class="gb" style="left:642px;top:697px"><span>≠</span></div>
<div class="gb" style="left:660px;top:697px"><span>&gt;</span></div>
<div class="gb" style="left:678px;top:697px"><span>≥</span></div>
<div class="gb" style="left:696px;top:697px"><span>∧</span></div>
<div class="gb" style="left:714px;top:697px"><span>→</span></div>
<div class="gb" style="left:732px;top:697px"><span>⊆</span></div>
<div class="gb" style="left:750px;top:697px"><span>∩</span></div>
<div class="gb" style="left:768px;top:697px"><span>↓</span></div>
<div class="gb" style="left:786px;top:697px"><span style="letter-spacing:-1.5px;font-size:11.5px;left:-6px">:∈</span></div>
<div class="gb" style="left:804px;top:697px"><span><i>i</i></span></div>
<div class="gb" style="left:822px;top:697px"><span><i>γ</i></span></div>
<div class="gb" style="left:840px;top:697px"><span>°</span></div>
<div class="gb" style="left:858px;top:697px"><span>∫</span></div>
<div class="gb" style="left:876px;top:697px"><span>Π</span></div>
<div class="gb" style="left:894px;top:697px"><span><i>ψ</i></span></div>
<div class="gb" style="left:912px;top:697px"><span>×</span></div>
<div class="a" style="left:0;top:738px;width:1024px;height:30px;background:linear-gradient(to bottom,#1E50D0 0,#1E50D0 1px,#4888F0 1.5px,#4888F0 2.5px,#2A62D8 3.5px,#2055D5 4.5px,#2055D5 19.5px,#2A62D8 20.5px,#2A62D8 23px,#3070E8 24px,#3070E8 26px,#2458D0 27px,#2458D0 28px,#1445B8 29px,#1445B8 30px)"></div>
<div class="a" style="left:0;top:736px;width:1024px;height:1px;background:#ACA899"></div>
<div class="a" style="left:0;top:737px;width:1024px;height:1px;background:#F4F1E2"></div>
<div class="a" style="left:0;top:738px;width:115px;height:30px;border-radius:0 13px 13px 0/0 15px 15px 0;background:linear-gradient(to bottom,#2E7D2E 0,#4FA64F 2px,#47A047 4px,#3C973C 8px,#3A963A 16px,#3B983B 22px,#2F872F 27px,#236F23 30px);box-shadow:inset -3px 0 3px -1px #256F25,inset 2px 0 2px -1px #256F25,1px 0 2px rgba(0,0,60,.55)"></div>
<div class="a" style="left:4px;top:741px;width:100px;height:6px;border-radius:6px;background:linear-gradient(to bottom,rgba(255,255,255,.28),rgba(255,255,255,0))"></div>
<svg class="a" style="left:10.5px;top:742.5px" width="22" height="22" viewBox="0 0 20 20"><path d="M3 3.5c2-1.5 4-1.5 6.5 0l-1.5 5.5c-2-1.5-4.5-1.5-6.5 0z" fill="#F0562A"/><path d="M10.5 4c2 1.5 4.5 1.5 6.5 0l-1.5 5.5c-2 1.5-4.5 1.5-6.5 0z" fill="#7DC242"/><path d="M1.200 10.200c2-1.5 4.5-1.5 6.5 0l-1.5 5.5c-2-1.5-4.5-1.5-6.5 0z" fill="#3E8BE8"/><path d="M8.700 10.700c2 1.5 4.5 1.5 6.5 0l-1.5 5.5c-2 1.5-4.5 1.5-6.5 0z" fill="#F8C830"/></svg>
<div class="t" style="left:35px;top:741px;height:24px;line-height:22px;font-size:18.5px;font-style:italic;font-weight:bold;color:#fff;text-shadow:1px 1px 1px #1A4A1A;transform:scaleX(.89);transform-origin:0 0">έναρξη</div>
<div class="a" style="left:125px;top:742px;width:159px;height:23px;border-radius:3px;background:linear-gradient(to bottom,#5B9AF3 0,#3C81F3 3px,#3A7DF0 18px,#3272E0 23px);box-shadow:inset 1px 1px 0 #6FA8F8,inset -1px -1px 0 #2A5FC8"></div>
<div class="a" style="left:284px;top:742px;width:159px;height:23px;border-radius:3px;background:linear-gradient(to bottom,#5B9AF3 0,#3C81F3 3px,#3A7DF0 18px,#3272E0 23px);box-shadow:inset 1px 1px 0 #6FA8F8,inset -1px -1px 0 #2A5FC8"></div>
<div class="a" style="left:444px;top:742px;width:160px;height:23px;border-radius:3px;background:#1E52B7;box-shadow:inset 1px 1px 1px #143E96,inset -1px -1px 0 #3A6CD0"></div>
<svg class="a" style="left:133px;top:744px" width="20" height="18" viewBox="0 0 20 18"><path d="M5.5 1.5h8l4 4v11h-12z" fill="#F6F4EC" stroke="#333"/><path d="M13.5 1.5v4h4" fill="#D8D4C4" stroke="#333"/><rect x="1.5" y="3.5" width="9" height="9" fill="#2A3CA8" stroke="#101860" stroke-dasharray="1 1"/><text x="2.200" y="11" font-family="Liberation Sans,sans-serif" font-size="8" font-weight="bold" fill="#fff">W</text></svg>
<div class="t" style="left:153px;top:747px;color:#fff;letter-spacing:-.3px">Η ΦΥΣΙΚΗ ΣΤΟ ΠΕΖΟ...</div>
<svg class="a" style="left:294px;top:745px" width="17" height="16" viewBox="0 0 17 16"><rect x="0.5" y="0.5" width="16" height="15" fill="#F6F4EC" stroke="#101860"/><rect x="1.5" y="1.5" width="14" height="13" fill="#202C90"/><text x="3" y="12.5" font-family="Liberation Sans,sans-serif" font-size="12" font-weight="bold" fill="#fff">W</text></svg>
<div class="t" style="left:313px;top:747px;color:#fff">Microsoft Word</div>
<svg class="a" style="left:456px;top:745px" width="16" height="16" viewBox="0 0 16 16"><rect x="0.5" y="0.5" width="15" height="15" fill="#C0C0C0" stroke="#E8201C" shape-rendering="crispEdges"/><path d="M4.5 2.300C8.5 3 12 6 11.5 10 11.200 13 7 14.200 5.200 12 3.800 10 5 7.200 7.300 7.400 9 7.600 9.5 10 8.300 11.5" fill="none" stroke="#B00808" stroke-width="2" stroke-linecap="round"/></svg>
<div class="t" style="left:474px;top:747px;color:#fff">Derive 6 - [2D-plot 1:1]</div>
<div class="a" style="left:844px;top:738px;width:180px;height:30px;background:linear-gradient(to bottom,#0840C0 0,#0840C0 1px,#18B0F4 1.5px,#18B0F4 2.5px,#1090E8 3.5px,#1090E8 27px,#1050C8 28.5px,#1050C8 30px);border-left:1px solid #0B5CB0"></div>
<div class="t" style="left:819px;top:747px;color:#fff;letter-spacing:-.5px">EN</div>
<div class="t" style="left:971px;top:747px;color:#fff">2:39 μμ</div>
<svg class="a" style="left:832px;top:740px" width="140" height="26" viewBox="832 740 140 26"><circle cx="844.5" cy="753.5" r="8.300" fill="#2E7FEA" stroke="#A8CCF4" stroke-width="1.200"/><path d="M836.5 756a8.300 8.300 0 0 0 16 0z" fill="#1C5CC8" opacity=".6"/><path d="M847 749.5l-4 4 4 4" fill="none" stroke="#fff" stroke-width="2.200"/><circle cx="865" cy="756" r="5.5" fill="#2458B8"/><path d="M862 754c2-2 4-1 5 1s-1 4-3 4-3-3-2-5z" fill="#3CA03C"/><path d="M857 747.5l4-2.5 1.5 4-4 2.5z" fill="#E8502A"/><path d="M862.5 745.5l4.5 1-1 4-4.5-1z" fill="#6CB82C"/><path d="M858.5 752l3.5-2 1.5 3.5-3.5 2z" fill="#3C78E0"/><path d="M863 751l4 1-1 3.5-4-1z" fill="#F0C020"/><rect x="879.5" y="745.5" width="8" height="7" fill="#202858" stroke="#8088B0"/><rect x="873.5" y="749.5" width="8" height="7" fill="#283070" stroke="#A0A8C8"/><rect x="874" y="758" width="8" height="2" fill="#C8CCE0"/><path d="M881.5 755.5l6 6M887.5 755.5l-6 6" stroke="#E82828" stroke-width="2"/><circle cx="899" cy="753" r="7.800" fill="#D0D0C8" stroke="#202020" stroke-width="1.200"/><path d="M895 747l-3.5 9.5h7zM903 748l-3.5 9h7z" fill="#2A7A2A"/><path d="M899 745.5v15" stroke="#F0F0E8" stroke-width="1"/><path d="M910.5 747.5h4l1 1.5h6.5v8h-11.5z" fill="#F4CC50" stroke="#907018"/><path d="M919 745.5h5v14h-6M918 762h5" fill="none" stroke="#58A0F0" stroke-width="1.600"/><rect x="928" y="746" width="15" height="14" fill="#0C1C0C"/><path d="M936 746.5l6.5 6.5-6.5 6.5-6.5-6.5z" fill="#18A018" stroke="#D8F8D8" stroke-width="1"/><path d="M935 748l-5 5 5 5" fill="none" stroke="#40E040" stroke-width="2"/><rect x="945" y="745" width="16" height="16" fill="#E81818"/><path d="M947.5 756c1-7 7-9.5 12-5.5M952.5 750.5l6 9.5" fill="none" stroke="#fff" stroke-width="1.800"/><rect x="945" y="757" width="4" height="4" fill="#F8D0D0"/></svg>
</div>
</body></html>
